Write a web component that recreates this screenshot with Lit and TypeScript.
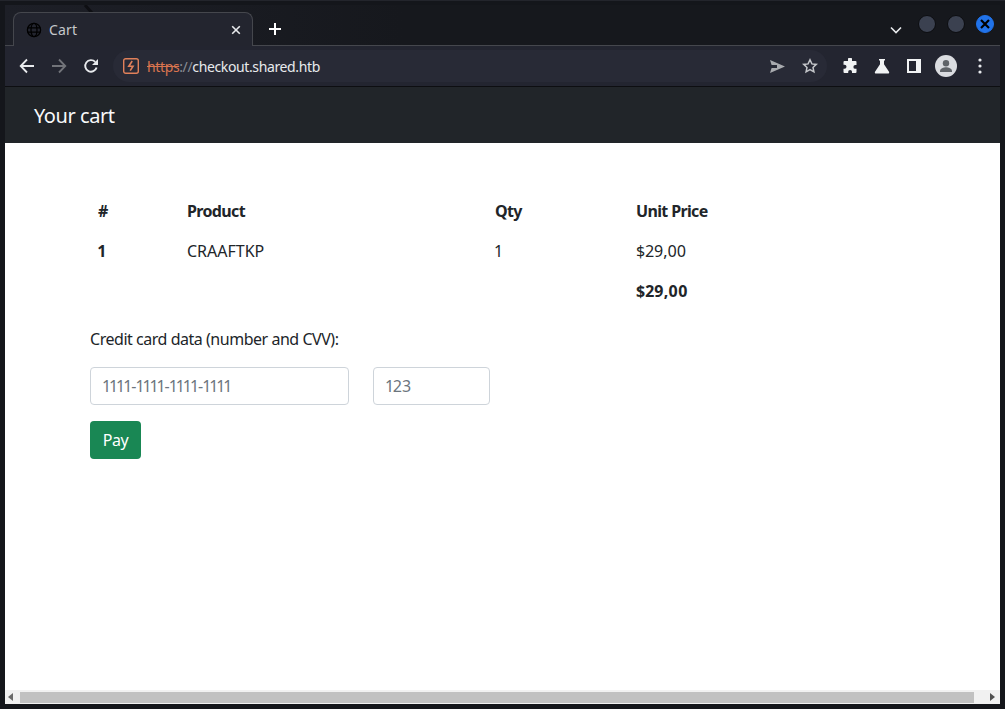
import { html, css, LitElement } from 'lit'
import { customElement } from 'lit/decorators.js'

@customElement('app-root')
export class AppRoot extends LitElement {
  render() {
    return html`
      <div class="window">
        <div class="tabstrip">
          <svg class="wallpaper" viewBox="0 0 120 8" width="120" height="8" fill="none" stroke="#0e0f13" stroke-width="3">
            <path d="M80 0l7 8" />
          </svg>
          <div class="tab">
            <svg class="globe" viewBox="0 0 16 16" width="16" height="16" fill="none" stroke="#000" stroke-width="1.3">
              <circle cx="8" cy="8" r="6.6" />
              <ellipse cx="8" cy="8" rx="3" ry="6.6" />
              <path d="M1.6 5.8h12.8M1.6 10.2h12.8" />
            </svg>
            <span class="tab-title">Cart</span>
            <svg class="tab-close" viewBox="0 0 10 10" width="10" height="10" stroke="#e8eaed" stroke-width="1.6">
              <path d="M1.2 1.2l7.6 7.6M8.8 1.2l-7.6 7.6" />
            </svg>
          </div>
          <svg class="new-tab" viewBox="0 0 14 14" width="14" height="14" stroke="#fff" stroke-width="2">
            <path d="M7 1v12M1 7h12" />
          </svg>
          <div class="strip-end">
            <svg viewBox="0 0 12 8" width="12" height="8" fill="none" stroke="#e8eaed" stroke-width="1.6">
              <path d="M1 1.5l5 5 5-5" />
            </svg>
            <div class="win-buttons">
              <span class="win-btn"></span>
              <span class="win-btn"></span>
              <span class="win-btn close">
                <svg viewBox="0 0 10 10" width="10" height="10" stroke="#000" stroke-width="2.2">
                  <path d="M1 1l8 8M9 1l-8 8" />
                </svg>
              </span>
            </div>
          </div>
        </div>

        <div class="toolbar">
          <svg class="nav" viewBox="0 0 16 16" width="16" height="16" fill="none" stroke="#e8eaed" stroke-width="1.8">
            <path d="M15 8H2M8 1.5L1.7 8 8 14.5" />
          </svg>
          <svg class="nav" viewBox="0 0 16 16" width="16" height="16" fill="none" stroke="#72747a" stroke-width="1.8">
            <path d="M1 8h13M8 1.5L14.3 8 8 14.5" />
          </svg>
          <svg class="nav" viewBox="0 0 16 16" width="16" height="16" fill="none" stroke="#e8eaed" stroke-width="1.9">
            <path d="M13.6 9.5A5.8 5.8 0 1 1 12.2 3.9" />
            <path d="M15 1v6H9z" fill="#e8eaed" stroke="none" />
          </svg>
          <div class="omnibox">
            <svg class="warn" viewBox="0 0 16 16" width="16" height="16" fill="none" stroke="#e0805a" stroke-width="1.4">
              <rect x="0.7" y="0.7" width="14.6" height="14.6" rx="2" />
              <path d="M9.2 3L5.8 8.2h4.2L7.2 12.6" stroke-width="1.6" />
            </svg>
            <span class="url"><s>https</s><span class="sep">://</span>checkout.shared.htb</span>
            <div class="omni-end">
              <svg class="send" viewBox="0 0 15 13" width="15" height="13" fill="#a9abaf">
                <path d="M0 0l15 6.5L0 13l1.6-5H7V5H1.6z" />
              </svg>
              <svg viewBox="0 0 16 16" width="16" height="16" fill="none" stroke="#c4c6ca" stroke-width="1.5">
                <path d="M8 1.8l1.9 4.1 4.4.5-3.3 3 .9 4.4L8 11.6l-3.9 2.2.9-4.4-3.3-3 4.4-.5z" />
              </svg>
            </div>
          </div>
          <div class="actions">
            <svg viewBox="0 0 16 16" width="16" height="16" fill="#f1f3f4">
              <path d="M6 1.2a2 2 0 0 1 4 .3V3h3.5a1 1 0 0 1 1 1v3h-1.2a1.9 1.9 0 0 0 0 3.8h1.2V14a1 1 0 0 1-1 1H10v-1.2a1.9 1.9 0 0 0-3.8 0V15H2.5a1 1 0 0 1-1-1v-3.2h1a2 2 0 0 0 0-4h-1V4a1 1 0 0 1 1-1H6z" />
            </svg>
            <svg viewBox="0 0 16 16" width="16" height="16" fill="#f1f3f4">
              <path d="M5 1h6v1.4H10v3.8l5 7.5c.5.8 0 1.8-1 1.8H2c-1 0-1.5-1-1-1.8l5-7.5V2.4H5z" />
            </svg>
            <svg class="side" viewBox="0 0 14 14" width="14" height="14" fill="#f1f3f4">
              <path fill-rule="evenodd" d="M0 0h14v14H0zM2 2v10h7V2z" />
            </svg>
            <svg class="avatar" viewBox="0 0 22 22" width="22" height="22">
              <circle cx="11" cy="11" r="11" fill="#dadce0" />
              <circle cx="11" cy="8.2" r="3.2" fill="#5f6368" />
              <path d="M5 16c0-2.6 3.6-3.8 6-3.8s6 1.2 6 3.8v1H5z" fill="#5f6368" />
            </svg>
            <svg class="dots" viewBox="0 0 4 16" width="4" height="16" fill="#e8eaed">
              <circle cx="2" cy="2" r="1.6" /><circle cx="2" cy="8" r="1.6" /><circle cx="2" cy="14" r="1.6" />
            </svg>
          </div>
        </div>

        <nav class="navbar">Your cart</nav>

        <main class="page">
          <table>
            <colgroup>
              <col class="c1" /><col class="c2" /><col class="c3" /><col />
            </colgroup>
            <thead>
              <tr><th>#</th><th class="tight">Product</th><th class="tight">Qty</th><th class="tight">Unit Price</th></tr>
            </thead>
            <tbody>
              <tr><th>1</th><td>CRAAFTKP</td><td>1</td><td>$29,00</td></tr>
              <tr><td></td><td></td><td></td><th>$29,00</th></tr>
            </tbody>
          </table>
          <label class="card-label">Credit card data (number and CVV):</label>
          <div class="inputs">
            <input class="number" placeholder="1111-1111-1111-1111" />
            <input class="cvv" placeholder="123" />
          </div>
          <button class="pay">Pay</button>
        </main>

        <div class="scrollbar">
          <svg viewBox="0 0 5 8" width="5" height="8" fill="#6a6a6a"><path d="M5 0v8L0 4z" /></svg>
          <div class="thumb"></div>
          <svg viewBox="0 0 5 8" width="5" height="8" fill="#505050"><path d="M0 0v8l5-4z" /></svg>
        </div>
      </div>
    `
  }

  static styles = css`
    :host {
      display: block;
      width: 1005px;
      height: 709px;
      background: #14161b;
      font-family: 'Noto Sans', sans-serif;
      font-variant-numeric: proportional-nums;
      overflow: hidden;
    }

    .window {
      height: 100%;
      box-sizing: border-box;
      padding: 5px 5px 5px 5px;
      display: flex;
      flex-direction: column;
      background: #14161b;
      border-top: 1px solid #23252c;
    }

    .tabstrip {
      position: relative;
      height: 41px;
      flex: none;
      display: flex;
      align-items: flex-end;
      padding-left: 8px;
      box-sizing: border-box;
      border-bottom: 1px solid #45474d;
      margin-top: -1px;
      background: linear-gradient(90deg, #1d1f27, #16181d 40%);
    }

    .wallpaper {
      position: absolute;
      left: 0;
      top: 0;
    }

    .tab {
      position: relative;
      width: 240px;
      height: 34px;
      box-sizing: border-box;
      margin-bottom: -1px;
      display: flex;
      align-items: center;
      padding: 0 12px;
      background: #23252f;
      border: 1px solid #45474d;
      border-bottom: none;
      border-radius: 8px 8px 0 0;
    }

    .tab-title {
      margin-left: 7px;
      font-size: 14px;
      letter-spacing: 0.2px;
      color: #c6c8cc;
      flex: 1;
    }

    .tab-close {
      margin-right: -1px;
    }

    .new-tab {
      margin: 0 0 9px 15px;
    }

    .strip-end {
      margin-left: auto;
      display: flex;
      align-items: center;
      align-self: stretch;
    }

    .strip-end > svg {
      margin: 10px 0 0 0;
    }

    .win-buttons {
      display: flex;
      gap: 11px;
      margin: -3px 6px 0 16px;
    }

    .win-btn {
      width: 18px;
      height: 18px;
      box-sizing: border-box;
      border-radius: 50%;
      background: #3b4150;
      border: 1px solid #0c0d10;
      display: flex;
      align-items: center;
      justify-content: center;
    }

    .win-btn.close {
      background: #2173ea;
      border-color: #2173ea;
    }

    .toolbar {
      height: 41px;
      flex: none;
      box-sizing: border-box;
      display: flex;
      align-items: center;
      background: #232530;
      border-bottom: 1px solid #0d0e11;
      padding: 0 14px;
    }

    .nav {
      margin-right: 16px;
    }

    .nav:last-of-type {
      margin-right: 0;
    }

    .omnibox {
      height: 32px;
      margin-left: 14px;
      width: 714px;
      flex: none;
      border-radius: 16px;
      background: #282a36;
      display: flex;
      align-items: center;
      padding: 0 9px;
      box-sizing: border-box;
    }

    .warn {
      margin-left: 1px;
    }

    .url {
      margin-left: 8px;
      font-size: 14px;
      letter-spacing: -0.37px;
      color: #e8eaed;
    }

    .url s {
      color: #d9744f;
    }

    .sep {
      color: #8a8d94;
    }

    .omni-end {
      margin-left: auto;
      display: flex;
      align-items: center;
      gap: 17px;
    }

    .actions {
      display: flex;
      align-items: center;
      margin-left: 15px;
      gap: 16px;
    }

    .side {
      margin-left: 1px;
    }

    .avatar {
      margin-left: -2px;
    }

    .dots {
      margin-left: 5px;
    }

    .navbar {
      height: 56px;
      flex: none;
      box-sizing: border-box;
      background: #212529;
      color: #f8f9fa;
      font-size: 20px;
      letter-spacing: -0.45px;
      line-height: 30px;
      padding: 14px 0 0 29px;
    }

    .page {
      flex: 1;
      min-height: 0;
      background: #fff;
      color: #212529;
      font-size: 16px;
      line-height: 24px;
      padding: 48px 85px 0;
    }

    table {
      border-collapse: collapse;
      width: 825px;
      table-layout: fixed;
      margin-bottom: 16px;
    }

    .c1 {
      width: 89px;
    }

    .c2 {
      width: 308px;
    }

    .c3 {
      width: 141px;
    }

    th,
    td {
      height: 40px;
      box-sizing: border-box;
      padding: 8px;
      text-align: left;
      font-weight: 400;
    }

    th {
      font-weight: 700;
    }

    th.tight {
      letter-spacing: -0.65px;
    }

    .card-label {
      display: block;
      margin-bottom: 16px;
      letter-spacing: -0.47px;
    }

    .inputs {
      display: flex;
      gap: 24px;
      margin-bottom: 16px;
    }

    input {
      height: 38px;
      box-sizing: border-box;
      padding: 6px 12px;
      border: 1px solid #ced4da;
      border-radius: 4px;
      font: inherit;
      font-variant-numeric: inherit;
      color: #212529;
      outline: none;
    }

    input::placeholder {
      color: #6c757d;
    }

    .number {
      width: 259px;
    }

    .cvv {
      width: 117px;
    }

    .pay {
      height: 38px;
      width: 51px;
      padding: 0;
      border: none;
      border-radius: 4px;
      background: #198754;
      color: #fff;
      font: inherit;
      letter-spacing: -0.4px;
    }

    .scrollbar {
      height: 14px;
      flex: none;
      display: flex;
      align-items: center;
      gap: 5px;
      background: #f1f1f1;
      padding: 0 5px 0 3px;
    }

    .thumb {
      flex: 1;
      height: 11px;
      margin-right: 11px;
      margin-left: 2px;
      background: #c1c1c1;
    }
  `
}
